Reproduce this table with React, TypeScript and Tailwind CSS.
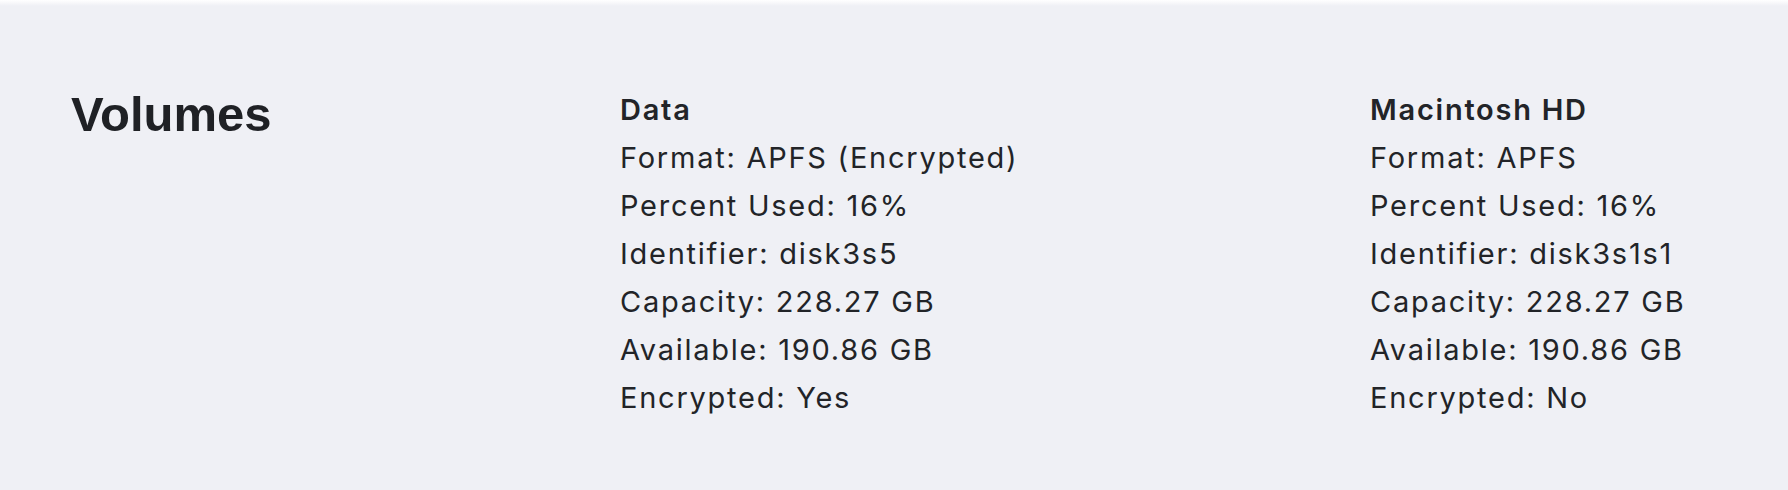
const volumes = [
  {
    name: "Data",
    rows: [
      ["Format", "APFS (Encrypted)"],
      ["Percent Used", "16%"],
      ["Identifier", "disk3s5"],
      ["Capacity", "228.27 GB"],
      ["Available", "190.86 GB"],
      ["Encrypted", "Yes"],
    ],
  },
  {
    name: "Macintosh HD",
    rows: [
      ["Format", "APFS"],
      ["Percent Used", "16%"],
      ["Identifier", "disk3s1s1"],
      ["Capacity", "228.27 GB"],
      ["Available", "190.86 GB"],
      ["Encrypted", "No"],
    ],
  },
];

export default function App() {
  return (
    <div className="min-h-[490px] w-full bg-[#eff0f5] text-[#222428]">
      <div className="h-[6px] bg-gradient-to-b from-white to-[#eff0f5]" />
      <section className="grid grid-cols-[549px_750px_1fr] pl-[71px] pt-[80px] pb-[68px]">
        <h2 className="mt-[3px] font-['Liberation_Sans',Arial,sans-serif] text-[49px] font-bold leading-[50px] text-[#1f2125]">
          Volumes
        </h2>
        {volumes.map((vol) => (
          <div
            key={vol.name}
            className="font-['Inter',sans-serif] text-[29px] leading-[48px] tracking-[1.75px]"
          >
            <div className="font-semibold">{vol.name}</div>
            {vol.rows.map(([label, value]) => (
              <div key={label}>
                {label}: {value}
              </div>
            ))}
          </div>
        ))}
      </section>
    </div>
  );
}
